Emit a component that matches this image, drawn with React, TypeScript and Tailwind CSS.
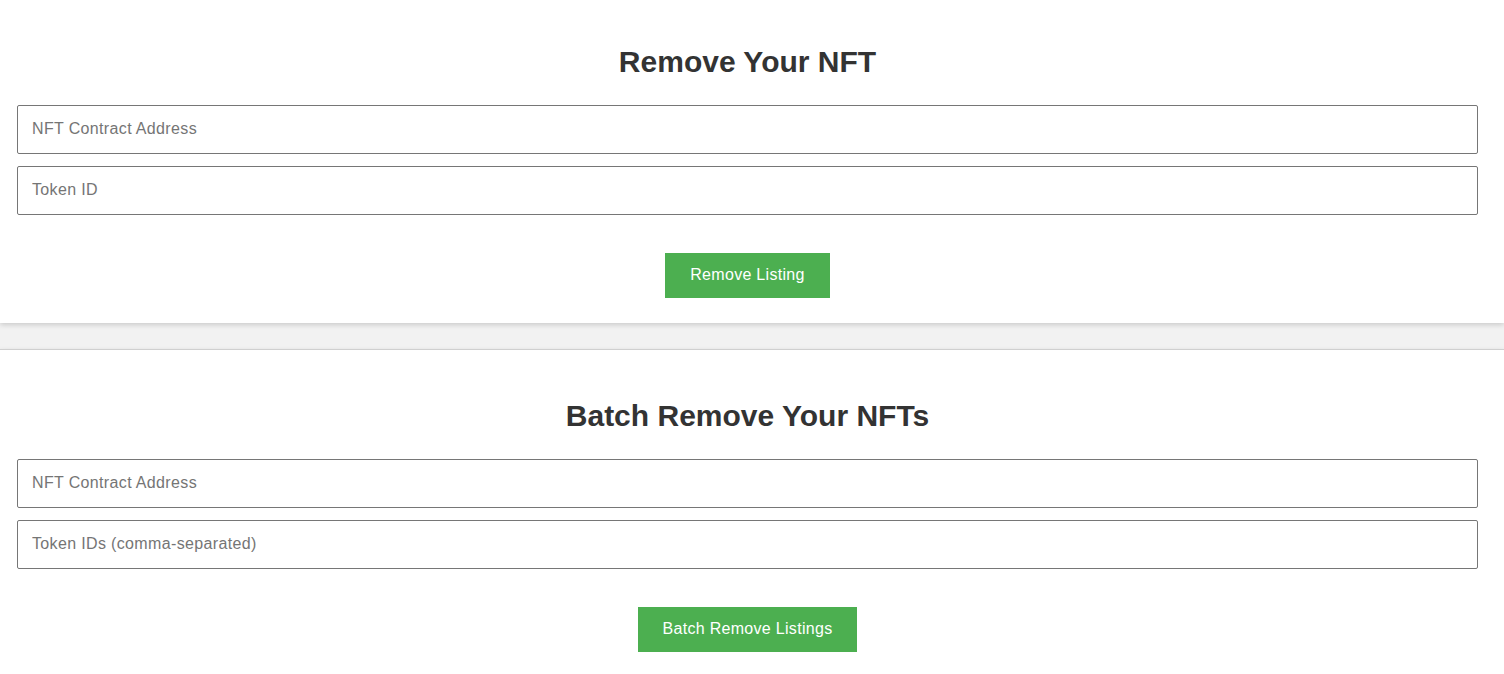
import { useState } from "react";

type CardProps = {
  title: string;
  fields: string[];
  action: string;
  top: string;
};

function RemoveCard({ title, fields, action, top }: CardProps) {
  const [values, setValues] = useState<string[]>(fields.map(() => ""));

  return (
    <section
      className={`bg-white ${top} pb-[25px] pl-[17px] pr-[26px] shadow-[0_2px_5px_rgba(0,0,0,0.16)]`}
    >
      <h2 className="text-center text-[30px] leading-[36px] font-bold text-[#333333]">
        {title}
      </h2>
      <div className="mt-[25px] flex flex-col gap-[12px]">
        {fields.map((f, i) => (
          <input
            key={f}
            type="text"
            placeholder={f}
            value={values[i]}
            onChange={(e) => {
              const next = [...values];
              next[i] = e.target.value;
              setValues(next);
            }}
            className="h-[49px] w-full rounded-[2px] border border-[#767676] bg-white px-[14px] pb-[2px] text-[16px] tracking-[0.35px] text-[#333] placeholder:text-[#757575] outline-none"
          />
        ))}
      </div>
      <div className="mt-[38px] flex justify-center">
        <button className="h-[45px] bg-[#4caf50] px-[25px] pb-[2px] text-[16px] tracking-[0.3px] text-white hover:bg-[#45a049]">
          {action}
        </button>
      </div>
    </section>
  );
}

export default function App() {
  return (
    <div
      className="min-h-screen bg-[#f2f2f2]"
      style={{ fontFamily: '"Liberation Sans", Arial, sans-serif' }}
    >
      <RemoveCard
        title="Remove Your NFT"
        fields={["NFT Contract Address", "Token ID"]}
        action="Remove Listing"
        top="pt-[44px]"
      />
      <div className="h-[26px]" />
      <RemoveCard
        title="Batch Remove Your NFTs"
        fields={["NFT Contract Address", "Token IDs (comma-separated)"]}
        action="Batch Remove Listings"
        top="pt-[48px] border-t border-[#d0d0d0]"
      />
    </div>
  );
}
